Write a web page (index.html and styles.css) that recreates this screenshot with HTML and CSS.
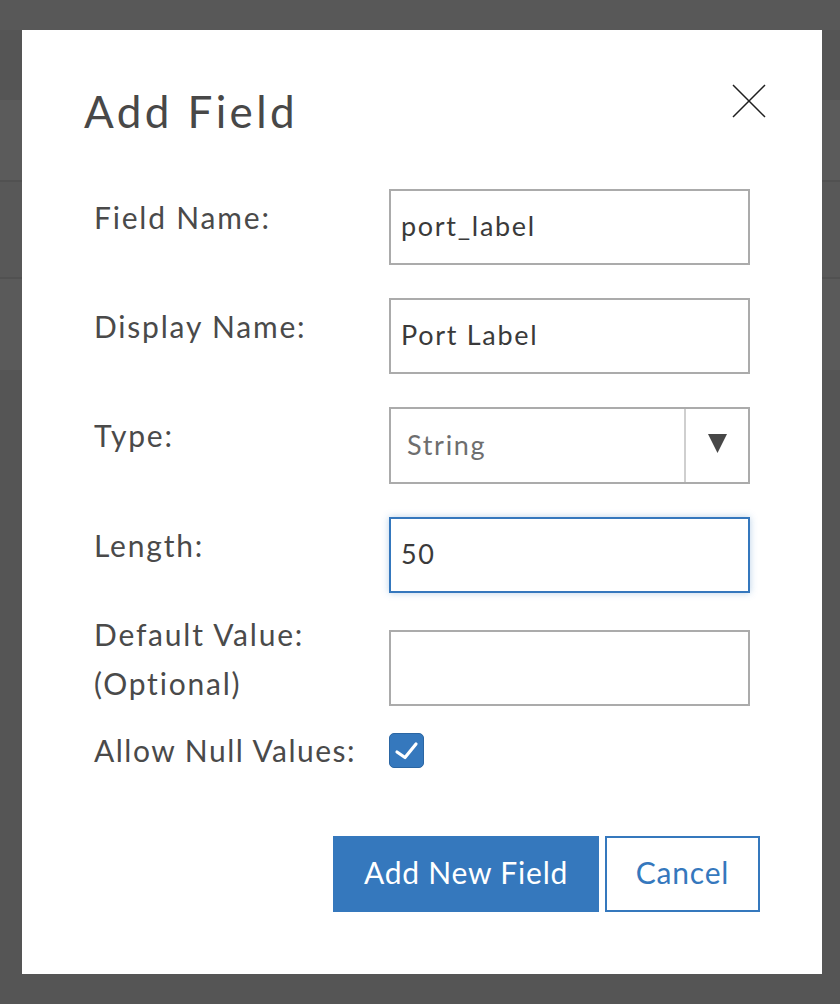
FILE: index.html
```html
<!DOCTYPE html>
<html lang="en">
<head>
<meta charset="utf-8">
<title>Add Field</title>
<link rel="stylesheet" href="styles.css">
</head>
<body>
<div class="backdrop">
  <div class="band band-a"></div>
  <div class="band band-b"></div>
  <div class="band band-c"></div>
  <div class="band-line"></div>
  <div class="band band-d"></div>
  <div class="band-line"></div>
  <div class="band band-e"></div>
  <div class="band band-f"></div>
</div>

<div class="modal">
  <div class="modal-header">
    <h1 class="modal-title">Add Field</h1>
    <button class="close-btn" aria-label="Close">
      <svg width="34" height="34" viewBox="0 0 34 34"><path d="M1 1 L33 33 M33 1 L1 33" stroke="#1f1f1f" stroke-width="1.5" fill="none"/></svg>
    </button>
  </div>

  <form class="field-form">
    <div class="row row-1">
      <label class="label">Field Name:</label>
      <div class="input">port_label</div>
    </div>
    <div class="row row-2">
      <label class="label">Display Name:</label>
      <div class="input">Port Label</div>
    </div>
    <div class="row row-3">
      <label class="label">Type:</label>
      <div class="select">
        <span class="select-value">String</span>
        <span class="select-arrow">
          <svg width="19" height="19" viewBox="0 0 19 19"><polygon points="0,0 19,0 9.5,19" fill="#474747"/></svg>
        </span>
      </div>
    </div>
    <div class="row row-4">
      <label class="label">Length:</label>
      <div class="input input-focus">50</div>
    </div>
    <div class="row row-5">
      <label class="label label-two">Default Value:<br>(Optional)</label>
      <div class="input"></div>
    </div>
    <div class="row row-6">
      <label class="label label-check">Allow Null Values:</label>
      <div class="checkbox">
        <svg width="35" height="35" viewBox="0 0 35 35"><path d="M8 19 L16 24.5 L27 11" stroke="#fff" stroke-width="3.2" fill="none" stroke-linecap="round" stroke-linejoin="round"/></svg>
      </div>
    </div>
  </form>

  <div class="actions">
    <button class="btn btn-primary">Add New Field</button>
    <button class="btn btn-secondary">Cancel</button>
  </div>
</div>
</body>
</html>
```
FILE: styles.css
```css
* { box-sizing: border-box; }

html, body {
  margin: 0;
  padding: 0;
}

body {
  width: 840px;
  height: 1004px;
  background: #555555;
  font-family: Lato, "Open Sans", sans-serif;
  overflow: hidden;
  position: relative;
}

.backdrop {
  display: flex;
  flex-direction: column;
}
.band-a { height: 30px; background: #585858; }
.band-b { height: 70px; background: #555555; }
.band-c { height: 80px; background: #5b5b5b; }
.band-line { height: 2px; background: #515151; }
.band-d { height: 95px; background: #585858; }
.band-e { height: 91px; background: #5a5a5a; }
.band-f { height: 634px; background: #555555; }

.modal {
  position: absolute;
  left: 22px;
  top: 30px;
  width: 800px;
  height: 944px;
  background: #ffffff;
  padding: 60px 56px 0 62px;
}

.modal-header {
  display: flex;
  justify-content: space-between;
  align-items: flex-start;
  height: 43px;
}

.modal-title {
  margin: 0;
  font-size: 44px;
  line-height: 43px;
  font-weight: 400;
  letter-spacing: 3.4px;
  color: #484848;
}

.close-btn {
  width: 34px;
  height: 34px;
  margin-top: -6px;
  padding: 0;
  border: 0;
  background: transparent;
  display: flex;
}

.field-form {
  margin-top: 56px;
  padding-left: 10px;
}

.row {
  display: grid;
  grid-template-columns: 295px 361px;
  align-items: start;
  height: 76px;
}
.row-1 { margin-bottom: 33px; }
.row-2 { margin-bottom: 33px; }
.row-3 { margin-bottom: 33px; height: 77px; }
.row-4 { margin-bottom: 37px; }
.row-5 { margin-bottom: 27px; }
.row-6 { height: 36px; }

.label {
  font-size: 30px;
  line-height: 49px;
  letter-spacing: 1.8px;
  color: #4a4a4a;
  margin-top: 4px;
  white-space: nowrap;
}
.label-two { margin-top: -20px; }
.label-check { margin-top: -7px; letter-spacing: 1.5px; }

.input {
  height: 76px;
  border: 2px solid #ababab;
  padding: 0 10px 4px;
  display: flex;
  align-items: center;
  font-size: 27px;
  letter-spacing: 1.7px;
  color: #3a3a3a;
  background: #fff;
}

.input-focus {
  border-color: #3477bd;
  box-shadow: 0 0 7px rgba(52, 119, 189, 0.35);
}

.select {
  height: 77px;
  border: 2px solid #ababab;
  display: flex;
  align-items: stretch;
}
.select-value {
  flex: 1;
  display: flex;
  align-items: center;
  padding: 0 0 3px 16px;
  font-size: 27px;
  letter-spacing: 1.7px;
  color: #6e6e6e;
}
.select-arrow {
  width: 64px;
  border-left: 2px solid #cfcfcf;
  display: flex;
  align-items: center;
  justify-content: center;
  padding-bottom: 4px;
}

.checkbox {
  width: 35px;
  height: 35px;
  border-radius: 5px;
  background: #3578bd;
  border: 1px solid #2b66a3;
  display: flex;
  align-items: center;
  justify-content: center;
}
.checkbox svg { display: block; margin: -1px; }

.actions {
  display: flex;
  justify-content: flex-end;
  gap: 6px;
  margin-top: 67px;
  margin-right: 6px;
}

.btn {
  height: 76px;
  font-family: Lato, "Open Sans", sans-serif;
  font-size: 30px;
  letter-spacing: 0.8px;
  padding: 0 0 5px;
  cursor: pointer;
}
.btn-primary {
  width: 266px;
  background: #3578bd;
  color: #ffffff;
  border: 0;
}
.btn-secondary {
  width: 155px;
  background: #ffffff;
  color: #3578bd;
  border: 2px solid #3578bd;
}
```
